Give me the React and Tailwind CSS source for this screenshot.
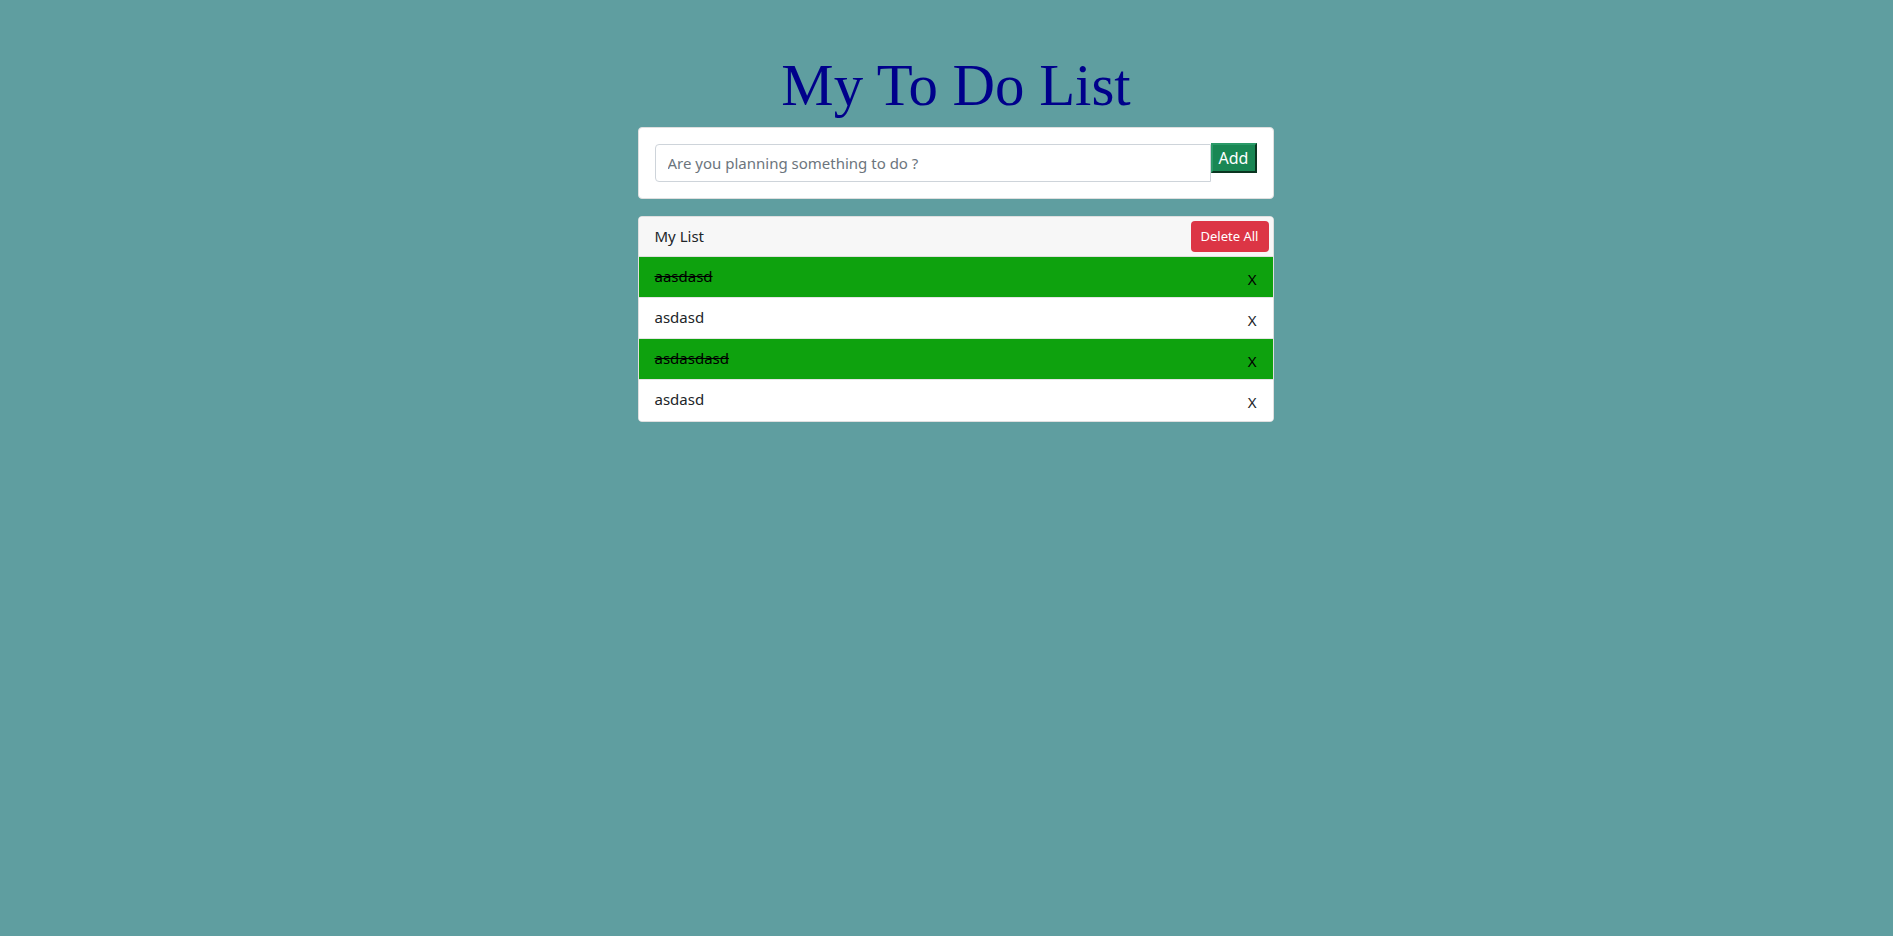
import React, { useState } from 'react';

const initialTodos = [
  { id: 1, text: 'aasdasd', done: true },
  { id: 2, text: 'asdasd', done: false },
  { id: 3, text: 'asdasdasd', done: true },
  { id: 4, text: 'asdasd', done: false },
];

const App = () => {
  const [todos, setTodos] = useState(initialTodos);
  const [value, setValue] = useState('');

  const addTodo = () => {
    if (!value.trim()) return;
    setTodos([...todos, { id: Date.now(), text: value, done: false }]);
    setValue('');
  };

  const toggle = (id) =>
    setTodos(todos.map((t) => (t.id === id ? { ...t, done: !t.done } : t)));

  const remove = (id) => setTodos(todos.filter((t) => t.id !== id));

  return (
    <div className="min-h-[936px] bg-[#5f9ea0] pt-[45px] font-['Noto_Sans',sans-serif] text-[#212529]">
      <div className="mx-auto w-[636px] translate-x-[9px]">
        {/* Titre */}
        <h1 className="text-center font-['Liberation_Serif',serif] text-[60px] leading-[80px] text-[#00008b] scale-x-[0.98]">
          My To Do List
        </h1>

        {/* Saisie */}
        <div className="mt-[2px] rounded-[4px] border border-[#dfdfdf] bg-white p-4">
          <div className="flex items-start">
            <input
              value={value}
              onChange={(e) => setValue(e.target.value)}
              placeholder="Are you planning something to do ?"
              className="h-[38px] flex-1 rounded-l-[4px] border border-[#ced4da] px-3 text-[15px] outline-none placeholder:text-[#6c757d]"
            />
            <button
              onClick={addTodo}
              className="mt-[-1px] h-[30px] w-[46px] border-2 border-t-[#2a9a68] border-l-[#2a9a68] border-r-[#0b3520] border-b-[#0b3520] bg-[#198754] text-[16px] leading-none text-white"
            >
              Add
            </button>
          </div>
        </div>

        {/* Liste */}
        <div className="mt-[17px] overflow-hidden rounded-[4px] border border-[#dfdfdf] bg-white">
          <div className="flex h-[40px] items-center justify-between border-b border-[#dfdfdf] bg-[#f7f7f7] pl-4 pr-[4px]">
            <span className="text-[15px]">My List</span>
            <button
              onClick={() => setTodos([])}
              className="h-[31px] w-[78px] rounded-[4px] bg-[#dc3545] text-[13px] text-white"
            >
              Delete All
            </button>
          </div>
          {todos.map((t, i) => (
            <div
              key={t.id}
              className={`flex h-[41px] justify-between pl-4 pr-[16px] ${
                t.done ? 'bg-[#0ea20e]' : 'bg-white'
              } ${i < todos.length - 1 ? 'border-b border-[#e5e5e5]' : ''}`}
            >
              <span
                onClick={() => toggle(t.id)}
                className={`mt-[8px] cursor-pointer text-[15px] ${
                  t.done ? 'line-through text-black' : ''
                }`}
              >
                {t.text}
              </span>
              <button
                onClick={() => remove(t.id)}
                className={`mt-[12px] h-[20px] text-[15px] leading-[20px] ${
                  t.done ? 'text-black' : 'text-[#212529]'
                }`}
              >
                X
              </button>
            </div>
          ))}
        </div>
      </div>
    </div>
  );
};

export default App;
